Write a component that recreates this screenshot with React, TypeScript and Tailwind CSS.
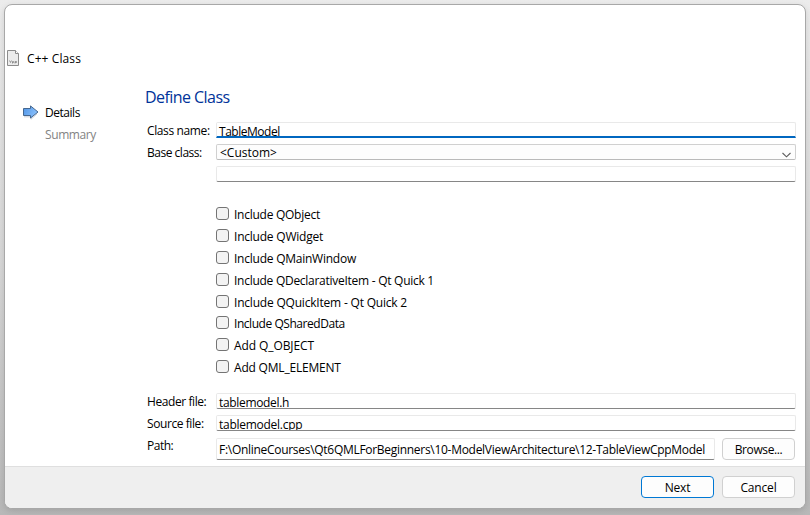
import type { ReactNode } from "react";

function Label({ children, className = "" }: { children: ReactNode; className?: string }) {
  return <span className={`block h-4 whitespace-pre leading-[18px] ${className}`}>{children}</span>;
}

function Checkbox({ label, tracking, height = "h-[22px]" }: { label: string; tracking: string; height?: string }) {
  return (
    <label className={`flex items-start gap-[5px] ${height}`}>
      <span className="mt-px size-[13px] rounded-[3px] border border-[#747474] bg-[#f3f3f3]" />
      <Label className={tracking}>{label}</Label>
    </label>
  );
}

const field = "overflow-hidden rounded-[2px] border border-[#e9e9e9] border-b-[#868686] bg-white";
const button = "flex h-[22px] w-[73px] justify-center rounded-[4px] border bg-[#fdfdfd] pt-[2px]";

function FileIcon() {
  return (
    <svg width="12" height="16" viewBox="0 0 12 16">
      <path d="M.5.5h8l3 3v12H.5z" fill="#ececec" stroke="#8c8c8c" />
      <path d="M8.5.5v3h3" fill="#fff" stroke="#8c8c8c" />
      <path d="M2.500 10.500l1 2 1-2M5.500 13.500v-2h1v1h-1M8 13.500v-2h1.500v1H8" fill="none" stroke="#777" strokeWidth=".7" />
    </svg>
  );
}

function ArrowIcon() {
  return (
    <svg className="mt-px" width="16" height="15" viewBox="0 0 16 15">
      <defs>
        <linearGradient id="arrow" x1="0" y1="0" x2="1" y2="0.4">
          <stop offset="0" stopColor="#4f94e6" />
          <stop offset="1" stopColor="#8ac0fb" />
        </linearGradient>
      </defs>
      <path d="M1 11.800h7v2.400l6-5.400" fill="none" stroke="#c9ced6" />
      <path d="M.5 3.500h7V.9L15 7l-7.500 6v-2.500h-7z" fill="url(#arrow)" stroke="#45678f" />
    </svg>
  );
}

export default function App() {
  return (
    <div className="h-[515px] w-[810px] bg-linear-to-b from-[#ececec] via-[#d8d8d8] to-[#b8b8b8] pl-1 pt-1 font-['Open_Sans','Noto_Sans',sans-serif] text-[12px] text-black">
      <div className="flex h-[505px] w-[802px] flex-col overflow-hidden rounded-[8px] border border-[#a8a8a8] bg-white shadow-[0_2px_6px_rgba(0,0,0,0.12)]">
        <header className="flex h-[83px] gap-2 pl-[2px] pt-[45px]">
          <FileIcon />
          <Label className="tracking-[0.1px]">C++ Class</Label>
        </header>

        <main className="flex h-[378px]">
          <aside className="w-[140px] pl-[18px] pt-4">
            <div className="flex h-[22px] gap-[6px]">
              <ArrowIcon />
              <Label className="tracking-[-0.47px]">Details</Label>
            </div>
            <Label className="pl-[22px] tracking-[-0.4px] text-[#838383]">Summary</Label>
          </aside>

          <section className="w-[651px]">
            <h1 className="-mt-px h-[35px] text-[16px] leading-5 tracking-[-0.56px] text-[#003399]">Define Class</h1>

            <div className="flex h-[22px]">
              <Label className="w-[71px] pl-[2px] tracking-[-0.38px]">Class name:</Label>
              <div className="h-4 w-[580px] overflow-hidden rounded-t-[2px] border border-b-2 border-[#e9e9e9] border-b-[#0067c0] pl-[2px]">
                <Label className="tracking-[-0.48px]">TableModel</Label>
              </div>
            </div>
            <div className="flex h-[22px]">
              <Label className="w-[71px] pl-[2px] tracking-[-0.48px]">Base class:</Label>
              <div className="flex h-4 w-[580px] justify-between rounded-[2px] border border-[#d0d0d0] border-b-[#bababa] bg-[#fdfdfd] pl-[3px] pr-[4px]">
                <Label className="-mt-px">{"<Custom>"}</Label>
                <svg className="mt-[7px]" width="9" height="6" viewBox="0 0 9 6">
                  <path d="M.5 1l4 3.800L8.500 1" fill="none" stroke="#5c5c5c" strokeWidth="1.100" />
                </svg>
              </div>
            </div>
            <div className={`ml-[71px] h-4 w-[580px] ${field}`} />

            <div className="ml-[71px] mt-6 h-[187px]">
              <Checkbox label="Include QObject" tracking="tracking-[-0.26px]" />
              <Checkbox label="Include QWidget" tracking="tracking-[-0.22px]" />
              <Checkbox label="Include QMainWindow" tracking="tracking-[-0.24px]" />
              <Checkbox label="Include QDeclarativeItem - Qt Quick 1" tracking="tracking-[-0.27px]" />
              <Checkbox label="Include QQuickItem - Qt Quick 2" tracking="tracking-[-0.2px]" height="h-[21px]" />
              <Checkbox label="Include QSharedData" tracking="tracking-[-0.45px]" />
              <Checkbox label="Add Q_OBJECT" tracking="tracking-[-0.09px]" />
              <Checkbox label="Add QML_ELEMENT" tracking="tracking-[-0.2px]" />
            </div>

            <div className="flex h-[22px]">
              <Label className="w-[71px] pl-[2px] tracking-[-0.42px]">Header file:</Label>
              <div className={`h-4 w-[580px] pl-[2px] ${field}`}>
                <Label className="tracking-[-0.33px]">tablemodel.h</Label>
              </div>
            </div>
            <div className="flex h-[23px]">
              <Label className="w-[71px] pl-[2px] tracking-[-0.42px]">Source file:</Label>
              <div className={`h-4 w-[580px] pl-[2px] ${field}`}>
                <Label className="tracking-[-0.27px]">tablemodel.cpp</Label>
              </div>
            </div>
            <div className="flex">
              <Label className="-mt-px w-[71px] pl-[2px] tracking-[-0.5px]">Path:</Label>
              <div className={`h-[22px] w-[499px] pl-[2px] pt-[2px] ${field}`}>
                <Label className="tracking-[-0.29px]">F:\OnlineCourses\Qt6QMLForBeginners\10-ModelViewArchitecture\12-TableViewCppModel</Label>
              </div>
              <button className={`ml-[7px] border-[#d0d0d0] ${button}`}>
                <Label className="tracking-[-0.4px]">Browse...</Label>
              </button>
            </div>
          </section>
        </main>

        <footer className="flex flex-1 justify-end gap-2 border-t border-[#dfdfdf] bg-[#efefef] pr-[10px] pt-[9px]">
          <button className={`border-[#0078d4] ${button}`}>
            <Label className="tracking-[-0.25px]">Next</Label>
          </button>
          <button className={`border-[#d0d0d0] ${button}`}>
            <Label className="tracking-[-0.15px]">Cancel</Label>
          </button>
        </footer>
      </div>
    </div>
  );
}
